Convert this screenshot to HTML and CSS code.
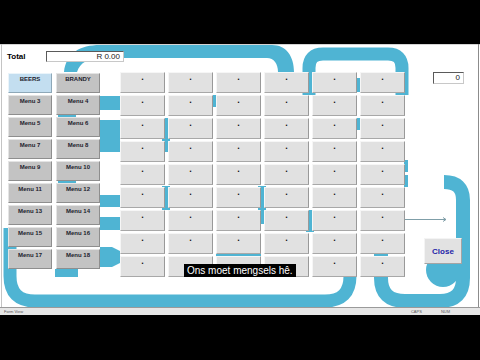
FILE: index.html
```
<!DOCTYPE html>
<html lang="af">
<head>
<meta charset="utf-8">
<title>Kassa</title>
<link rel="stylesheet" href="styles.css">
</head>
<body>
<div class="bar-top"></div>
<div class="form">
  <svg class="bg" width="480" height="264" viewBox="0 44 480 264" xmlns="http://www.w3.org/2000/svg">
    <g fill="#4fb4d3">
      <path d="M 64 72 C 66 53 80 45 100 45 L 272 45 C 286 45 294 56 294 72 L 294 84 L 278 84 L 278 72 C 278 64 274 58 267 58 L 100 58 C 88 58 80 63 77 72 Z"/>
      <rect x="100" y="96" width="20" height="14"/>
      <rect x="100" y="120" width="20" height="32"/>
      <rect x="100" y="195" width="20" height="12"/>
      <rect x="100" y="217" width="20" height="13"/>
      <polygon points="100,247 112,247 120,251 120,263 112,267 100,267"/>
      <rect x="55" y="269" width="23" height="8"/>
      <rect x="58" y="180" width="18" height="4"/>
      <rect x="58" y="114" width="18" height="4"/>
      <rect x="162" y="118" width="8" height="34"/>
      <rect x="162" y="186" width="8" height="24"/>
      <rect x="210" y="95" width="8" height="12"/>
      <rect x="258" y="186" width="8" height="24"/>
      <rect x="258" y="210" width="8" height="14"/>
      <rect x="306" y="210" width="8" height="22"/>
      <rect x="354" y="78" width="8" height="14"/>
      <rect x="354" y="118" width="8" height="12"/>
      <rect x="404" y="175" width="4" height="12"/>
      <rect x="404" y="160" width="4" height="12"/>
      <rect x="216" y="251" width="45" height="6"/>
      <circle cx="443" cy="270" r="17"/>
    </g>
    <g fill="none" stroke="#4fb4d3" stroke-width="13">
      <path d="M 309 95 L 309 68 Q 309 54 323 54 L 388 54 Q 402 54 402 68 L 402 95"/>
      <path d="M 10 228 L 10 276 Q 10 301 35 301 L 325 301 Q 350 301 350 276 L 350 262"/>
    </g>
    <path d="M 444 182 Q 463 182 463 200 L 463 278 Q 463 301 440 301 L 405 301 Q 381 301 381 278 L 381 250" fill="none" stroke="#4fb4d3" stroke-width="14"/>
    <g stroke="#7f9ea8" stroke-width="1" fill="none">
      <path d="M 405 219.5 L 446 219.5"/>
      <path d="M 443 217.5 L 446 219.5 L 443 221.5"/>
    </g>
    <g fill="none" stroke-width="1">
      <path d="M 0 44.5 L 480 44.5" stroke="#d4d4d4"/>
      <path d="M 1.5 44 L 1.5 308" stroke="#c4c4c4"/>
      <path d="M 478.5 44 L 478.5 308" stroke="#8c8c8c"/>
      <path d="M 0 307.5 L 480 307.5" stroke="#9a9a9a"/>
    </g>
  </svg>

  <div class="total-row">
    <span class="total-label">Total</span>
    <div class="total-box">R 0.00</div>
  </div>

  <div class="main">
    <div class="menu-grid">
      <button class="menu-btn active">BEERS</button>
      <button class="menu-btn">BRANDY</button>
      <button class="menu-btn">Menu 3</button>
      <button class="menu-btn">Menu 4</button>
      <button class="menu-btn">Menu 5</button>
      <button class="menu-btn">Menu 6</button>
      <button class="menu-btn">Menu 7</button>
      <button class="menu-btn">Menu 8</button>
      <button class="menu-btn">Menu 9</button>
      <button class="menu-btn">Menu 10</button>
      <button class="menu-btn">Menu 11</button>
      <button class="menu-btn">Menu 12</button>
      <button class="menu-btn">Menu 13</button>
      <button class="menu-btn">Menu 14</button>
      <button class="menu-btn">Menu 15</button>
      <button class="menu-btn">Menu 16</button>
      <button class="menu-btn">Menu 17</button>
      <button class="menu-btn">Menu 18</button>
    </div>

    <div class="item-grid">
      <button class="item-btn">.</button><button class="item-btn">.</button><button class="item-btn">.</button><button class="item-btn">.</button><button class="item-btn">.</button><button class="item-btn">.</button>
      <button class="item-btn">.</button><button class="item-btn">.</button><button class="item-btn">.</button><button class="item-btn">.</button><button class="item-btn">.</button><button class="item-btn">.</button>
      <button class="item-btn">.</button><button class="item-btn">.</button><button class="item-btn">.</button><button class="item-btn">.</button><button class="item-btn">.</button><button class="item-btn">.</button>
      <button class="item-btn">.</button><button class="item-btn">.</button><button class="item-btn">.</button><button class="item-btn">.</button><button class="item-btn">.</button><button class="item-btn">.</button>
      <button class="item-btn">.</button><button class="item-btn">.</button><button class="item-btn">.</button><button class="item-btn">.</button><button class="item-btn">.</button><button class="item-btn">.</button>
      <button class="item-btn">.</button><button class="item-btn">.</button><button class="item-btn">.</button><button class="item-btn">.</button><button class="item-btn">.</button><button class="item-btn">.</button>
      <button class="item-btn">.</button><button class="item-btn">.</button><button class="item-btn">.</button><button class="item-btn">.</button><button class="item-btn">.</button><button class="item-btn">.</button>
      <button class="item-btn">.</button><button class="item-btn">.</button><button class="item-btn">.</button><button class="item-btn">.</button><button class="item-btn">.</button><button class="item-btn">.</button>
      <button class="item-btn">.</button><button class="item-btn"></button><button class="item-btn"></button><button class="item-btn"></button><button class="item-btn">.</button><button class="item-btn">.</button>
    </div>

    <div class="side">
      <div class="count-box">0</div>
      <button class="close-btn">Close</button>
    </div>
  </div>

  <div class="subtitle">Ons moet mengsels hê.</div>
</div>
<div class="status">
  <span class="status-mode">Form View</span>
  <span class="status-keys"><span class="key-caps">CAPS</span><span class="key-num">NUM</span></span>
</div>
<div class="bar-bottom"></div>
</body>
</html>
```
FILE: styles.css
```
html, body {
  margin: 0;
  padding: 0;
}

body {
  width: 480px;
  height: 360px;
  overflow: hidden;
  background: #000;
  font-family: "Liberation Sans", Arial, sans-serif;
  color: #111;
}

.bar-top {
  height: 44px;
}

.bar-bottom {
  height: 45px;
}

.form {
  position: relative;
  height: 264px;
  box-sizing: border-box;
  padding: 7px 0 0 7px;
  background: #fff;
}

.bg {
  position: absolute;
  left: 0;
  top: 0;
}

.total-row {
  position: relative;
  display: flex;
  align-items: center;
  height: 11px;
}

.total-label {
  width: 39px;
  font-size: 8px;
  font-weight: bold;
  color: #000;
}

.total-box {
  width: 78px;
  height: 11px;
  box-sizing: border-box;
  border: 1px solid #5a5a5a;
  border-right-color: #c8c8c8;
  border-bottom-color: #c8c8c8;
  background: #fff;
  font-size: 8px;
  line-height: 9px;
  text-align: right;
  padding-right: 3px;
  color: #222;
}

.main {
  position: relative;
  display: flex;
  align-items: flex-start;
  margin-top: 10px;
}

.menu-grid {
  display: grid;
  grid-template-columns: 44px 44px;
  grid-auto-rows: 20px;
  column-gap: 4px;
  row-gap: 2px;
  margin: 1px 0 0 1px;
}

.menu-btn,
.item-btn,
.close-btn {
  margin: 0;
  box-sizing: border-box;
  font-family: "Liberation Sans", Arial, sans-serif;
  cursor: default;
}

.menu-btn {
  display: flex;
  justify-content: center;
  align-items: flex-start;
  padding: 2px 0 0;
  background: #c3c3c3;
  border: 1px solid;
  border-color: #e4e4e4 #8e8e8e #8e8e8e #e4e4e4;
  font-size: 6px;
  line-height: 7px;
  font-weight: bold;
  color: #1c1c2c;
}

.menu-btn.active {
  background: #c3def0;
  border-color: #eaf4fa #8ea8b8 #8ea8b8 #eaf4fa;
}

.item-grid {
  display: grid;
  grid-template-columns: repeat(6, 45px);
  grid-auto-rows: 21px;
  column-gap: 3px;
  row-gap: 2px;
  margin-left: 20px;
}

.item-btn {
  display: flex;
  justify-content: center;
  align-items: flex-start;
  padding: 1px 0 0;
  background: #e1e1e1;
  border: 1px solid;
  border-color: #f6f6f6 #999 #a8a8a8 #f6f6f6;
  font-size: 9px;
  line-height: 7px;
  font-weight: bold;
  color: #111;
}

.side {
  display: flex;
  flex-direction: column;
  align-items: flex-start;
  margin-left: 19px;
}

.count-box {
  margin-left: 9px;
  width: 31px;
  height: 12px;
  box-sizing: border-box;
  border: 1px solid #5a5a5a;
  border-right-color: #c8c8c8;
  border-bottom-color: #c8c8c8;
  background: #fff;
  font-size: 8px;
  line-height: 10px;
  text-align: right;
  padding-right: 3px;
  color: #222;
}

.close-btn {
  margin-top: 154px;
  width: 38px;
  height: 26px;
  padding: 0;
  background: #e2e2e2;
  border: 1px solid;
  border-color: #f4f4f4 #a4a4a4 #a4a4a4 #f4f4f4;
  color: #1f1fa8;
  font-size: 8px;
  font-weight: bold;
}

.subtitle {
  position: absolute;
  left: 184px;
  top: 220px;
  height: 13px;
  padding: 0 3px;
  background: #000;
  color: #fff;
  font-family: "Liberation Sans", Arial, sans-serif;
  font-size: 10px;
  line-height: 13px;
  white-space: nowrap;
}

.status {
  display: flex;
  justify-content: space-between;
  height: 7px;
  box-sizing: border-box;
  background: #e6e6e6;
  padding: 0 4px;
  font-size: 4px;
  line-height: 7px;
  color: #555;
}

.status-keys {
  display: flex;
  gap: 19px;
  margin-right: 26px;
}
```
